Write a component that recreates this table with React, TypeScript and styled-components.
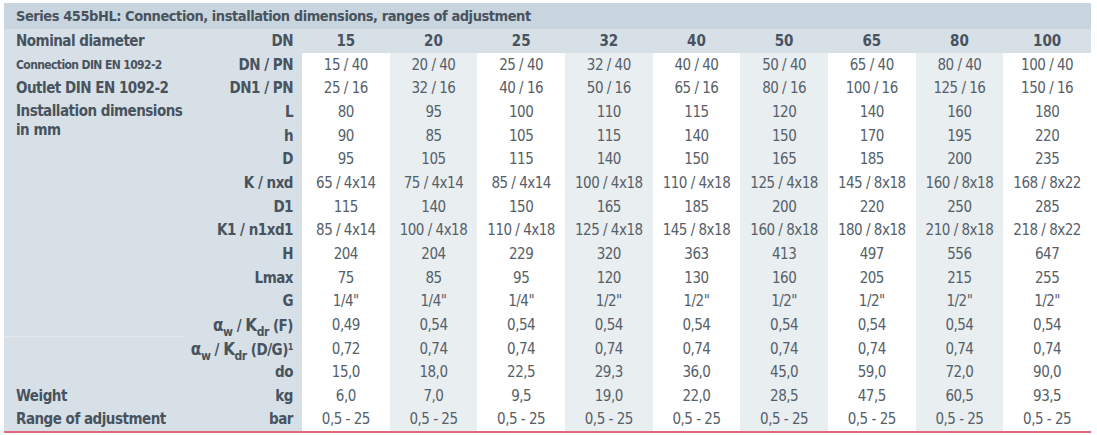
import React from "react";
import styled, { createGlobalStyle } from "styled-components";

const GlobalStyle = createGlobalStyle`
  body {
    margin: 0;
    background: #ffffff;
    font-family: "Liberation Sans Narrow", "DejaVu Sans Condensed", "Liberation Sans", sans-serif;
  }
`;

const Page = styled.div`
  padding: 3px 6px 0 4px;
`;

const Table = styled.table`
  border-collapse: collapse;
  table-layout: fixed;
  width: 1087px;
  color: #48535e;
`;

const TitleCell = styled.th`
  background: #c9d5de;
  height: 26px;
  padding: 0 0 0 12px;
  text-align: left;
  font-size: 14.5px;
  font-weight: bold;
  letter-spacing: -0.45px;
  white-space: nowrap;
`;

const Row = styled.tr<{ $last?: boolean }>`
  height: 23.7px;
  border-bottom: ${(p) => (p.$last ? "2px solid #e2687c" : "none")};
`;

const LabelCell = styled.td<{ $small?: boolean; $rule?: boolean }>`
  background: #d7e0e7;
  padding: 0 0 0 12px;
  font-size: ${(p) => (p.$small ? "12px" : "15px")};
  letter-spacing: ${(p) => (p.$small ? "-0.6px" : "-0.5px")};
  font-weight: bold;
  white-space: nowrap;
  vertical-align: middle;
  border-top: ${(p) => (p.$rule ? "1px solid #e3e9ee" : "none")};
`;

const WrapLabel = styled(LabelCell)`
  vertical-align: top;
  padding-top: 2px;
  line-height: 19px;
`;

const UnitCell = styled.td`
  background: #d7e0e7;
  padding: 0 9px 0 0;
  text-align: right;
  font-size: 15px;
  letter-spacing: -0.5px;
  font-weight: bold;
  white-space: nowrap;
`;

const HeadCell = styled.td`
  background: #d7e0e7;
  text-align: center;
  font-size: 15px;
  font-weight: bold;
`;

const ValueCell = styled.td<{ $shade: boolean }>`
  background: ${(p) => (p.$shade ? "#e9eef1" : "#ffffff")};
  text-align: center;
  font-size: 15px;
  letter-spacing: -0.5px;
  color: #566069;
  white-space: nowrap;
`;

const Greek = styled.span`
  font-size: 17px;
`;

const Sub = styled.sub`
  font-size: 12px;
  vertical-align: -5px;
  line-height: 0;
`;

const Sup = styled.sup`
  font-size: 9px;
  vertical-align: 5px;
  line-height: 0;
`;

const Alpha: React.FC<{ tail: React.ReactNode }> = ({ tail }) => (
  <>
    <Greek>α</Greek>
    <Sub>w</Sub> / <Greek>K</Greek>
    <Sub>dr</Sub> {tail}
  </>
);

const sizes = ["15", "20", "25", "32", "40", "50", "65", "80", "100"];

type Line = {
  label?: React.ReactNode;
  small?: boolean;
  rule?: boolean;
  unit: React.ReactNode;
  values: string[];
};

const lines: Line[] = [
  {
    label: "Connection DIN EN 1092-2",
    small: true,
    unit: "DN / PN",
    values: ["15 / 40", "20 / 40", "25 / 40", "32 / 40", "40 / 40", "50 / 40", "65 / 40", "80 / 40", "100 / 40"],
  },
  {
    label: "Outlet DIN EN 1092-2",
    unit: "DN1 / PN",
    values: ["25 / 16", "32 / 16", "40 / 16", "50 / 16", "65 / 16", "80 / 16", "100 / 16", "125 / 16", "150 / 16"],
  },
  { unit: "L", values: ["80", "95", "100", "110", "115", "120", "140", "160", "180"] },
  { unit: "h", values: ["90", "85", "105", "115", "140", "150", "170", "195", "220"] },
  { label: "", unit: "D", values: ["95", "105", "115", "140", "150", "165", "185", "200", "235"] },
  {
    label: "",
    unit: "K / nxd",
    values: ["65 / 4x14", "75 / 4x14", "85 / 4x14", "100 / 4x18", "110 / 4x18", "125 / 4x18", "145 / 8x18", "160 / 8x18", "168 / 8x22"],
  },
  { label: "", unit: "D1", values: ["115", "140", "150", "165", "185", "200", "220", "250", "285"] },
  {
    label: "",
    unit: "K1 / n1xd1",
    values: ["85 / 4x14", "100 / 4x18", "110 / 4x18", "125 / 4x18", "145 / 8x18", "160 / 8x18", "180 / 8x18", "210 / 8x18", "218 / 8x22"],
  },
  { label: "", unit: "H", values: ["204", "204", "229", "320", "363", "413", "497", "556", "647"] },
  { label: "", unit: "Lmax", values: ["75", "85", "95", "120", "130", "160", "205", "215", "255"] },
  { label: "", unit: "G", values: ['1/4"', '1/4"', '1/4"', '1/2"', '1/2"', '1/2"', '1/2"', '1/2"', '1/2"'] },
  {
    label: "",
    unit: <Alpha tail="(F)" />,
    values: ["0,49", "0,54", "0,54", "0,54", "0,54", "0,54", "0,54", "0,54", "0,54"],
  },
  {
    label: "",
    rule: true,
    unit: <Alpha tail={<>(D/G)<Sup>1</Sup></>} />,
    values: ["0,72", "0,74", "0,74", "0,74", "0,74", "0,74", "0,74", "0,74", "0,74"],
  },
  { label: "", unit: "do", values: ["15,0", "18,0", "22,5", "29,3", "36,0", "45,0", "59,0", "72,0", "90,0"] },
  { label: "Weight", unit: "kg", values: ["6,0", "7,0", "9,5", "19,0", "22,0", "28,5", "47,5", "60,5", "93,5"] },
  {
    label: "Range of adjustment",
    unit: "bar",
    values: ["0,5 - 25", "0,5 - 25", "0,5 - 25", "0,5 - 25", "0,5 - 25", "0,5 - 25", "0,5 - 25", "0,5 - 25", "0,5 - 25"],
  },
];

const App: React.FC = () => {
  return (
    <Page>
      <GlobalStyle />
      <Table>
        <colgroup>
          <col style={{ width: 181 }} />
          <col style={{ width: 117 }} />
          {sizes.map((s) => (
            <col key={s} />
          ))}
        </colgroup>
        <thead>
          <tr>
            <TitleCell colSpan={11}>
              Series 455bHL: Connection, installation dimensions, ranges of adjustment
            </TitleCell>
          </tr>
        </thead>
        <tbody>
          <Row>
            <LabelCell>Nominal diameter</LabelCell>
            <UnitCell>DN</UnitCell>
            {sizes.map((s) => (
              <HeadCell key={s}>{s}</HeadCell>
            ))}
          </Row>
          {lines.map((line, i) => (
            <Row key={i} $last={i === lines.length - 1}>
              {i === 2 && (
                <WrapLabel rowSpan={2}>
                  Installation dimensions
                  <br />
                  in mm
                </WrapLabel>
              )}
              {line.label !== undefined && (
                <LabelCell $small={line.small} $rule={line.rule}>
                  {line.label}
                </LabelCell>
              )}
              <UnitCell>{line.unit}</UnitCell>
              {line.values.map((v, j) => (
                <ValueCell key={j} $shade={j % 2 === 1}>
                  {v}
                </ValueCell>
              ))}
            </Row>
          ))}
        </tbody>
      </Table>
    </Page>
  );
};

export default App;
